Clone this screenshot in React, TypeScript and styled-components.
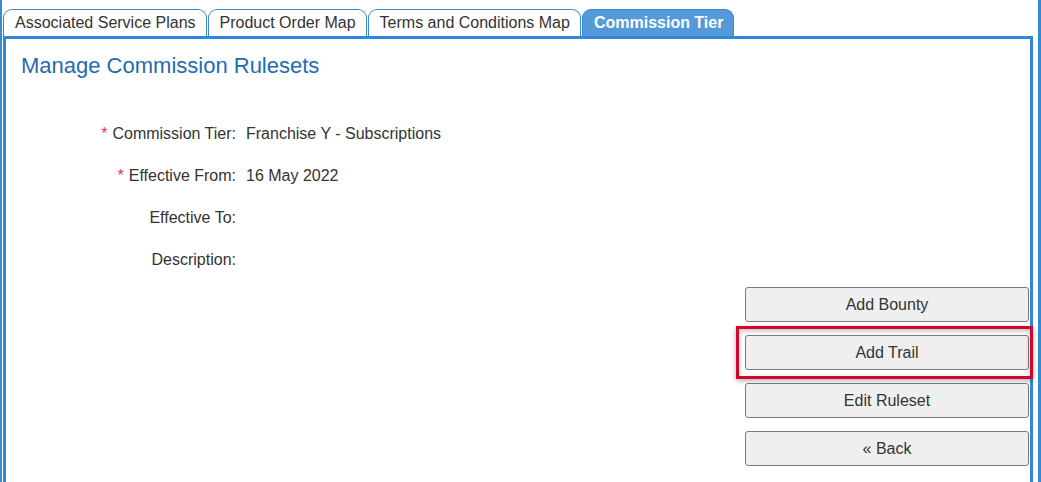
import styled, { createGlobalStyle } from "styled-components";

const GlobalStyle = createGlobalStyle`
  body {
    margin: 0;
    background: #fff;
    font-family: "Liberation Sans", Arial, sans-serif;
  }
`;

const Frame = styled.div`
  width: 1033px;
  min-height: 482px;
  border-left: 2px solid #3a8ad8;
  border-right: 3px solid #3388d8;
  padding-left: 1px;
  padding-right: 2px;
  box-sizing: content-box;
  margin-right: 3px;
  overflow: hidden;
`;

const TabBar = styled.div`
  display: flex;
  gap: 1px;
  padding-top: 9px;
  height: 27px;
`;

const Tab = styled.div<{ $active?: boolean }>`
  display: flex;
  align-items: center;
  height: 27px;
  box-sizing: border-box;
  padding: 0 10px 0 11px;
  border: 1px solid #3b88d0;
  border-bottom: none;
  border-radius: 9px 9px 0 0;
  font-size: 16px;
  color: ${(p) => (p.$active ? "#fff" : "#333")};
  font-weight: ${(p) => (p.$active ? "bold" : "normal")};
  background: ${(p) => (p.$active ? "#5499da" : "#fff")};
  white-space: nowrap;
`;

const Panel = styled.div`
  width: 1030px;
  box-sizing: border-box;
  min-height: 460px;
  border: 3px solid #3088d8;
  padding: 14px 0 20px 15px;
`;

const Title = styled.h1`
  margin: 0;
  font-size: 22px;
  font-weight: normal;
  color: #1f6cb2;
  line-height: 26px;
`;

const Form = styled.div`
  display: grid;
  grid-template-columns: 215px 1fr;
  column-gap: 10px;
  margin-top: 34px;
  font-size: 16px;
  color: #333;
`;

const Label = styled.div`
  height: 42px;
  display: flex;
  align-items: center;
  justify-content: flex-end;
  white-space: nowrap;
`;

const Required = styled.span`
  color: #e8393f;
  margin-right: 5px;
`;

const Value = styled.div`
  height: 42px;
  display: flex;
  align-items: center;
`;

const Actions = styled.div`
  display: flex;
  flex-direction: column;
  align-items: flex-end;
  gap: 13px;
  margin-top: 6px;
  padding-right: 1px;
`;

const ButtonSlot = styled.div`
  position: relative;
`;

const Button = styled.button`
  width: 284px;
  height: 35px;
  background: #efefef;
  border: 1px solid #7a7a7a;
  border-radius: 3px;
  font-family: "Liberation Sans", Arial, sans-serif;
  font-size: 16px;
  color: #333;
  cursor: pointer;
`;

const Highlight = styled.div`
  position: absolute;
  top: -9px;
  left: -9px;
  right: -4px;
  bottom: -9px;
  border: 3px solid #d3062a;
  box-shadow: 0 2px 5px rgba(0, 0, 0, 0.3), inset 0 2px 5px rgba(0, 0, 0, 0.25);
  pointer-events: none;
`;

const tabs = [
  "Associated Service Plans",
  "Product Order Map",
  "Terms and Conditions Map",
  "Commission Tier",
];

const fields = [
  { label: "Commission Tier:", value: "Franchise Y - Subscriptions", required: true },
  { label: "Effective From:", value: "16 May 2022", required: true },
  { label: "Effective To:", value: "", required: false },
  { label: "Description:", value: "", required: false },
];

const buttons = [
  { text: "Add Bounty" },
  { text: "Add Trail", highlighted: true },
  { text: "Edit Ruleset" },
  { text: "« Back" },
];

export default function App() {
  return (
    <>
      <GlobalStyle />
      <Frame>
        <TabBar>
          {tabs.map((t, i) => (
            <Tab key={t} $active={i === tabs.length - 1}>
              {t}
            </Tab>
          ))}
        </TabBar>
        <Panel>
          <Title>Manage Commission Rulesets</Title>
          <Form>
            {fields.map((f) => [
              <Label key={f.label + "l"}>
                {f.required && <Required>*</Required>}
                {f.label}
              </Label>,
              <Value key={f.label + "v"}>{f.value}</Value>,
            ])}
          </Form>
          <Actions>
            {buttons.map((b) => (
              <ButtonSlot key={b.text}>
                <Button>{b.text}</Button>
                {b.highlighted && <Highlight />}
              </ButtonSlot>
            ))}
          </Actions>
        </Panel>
      </Frame>
    </>
  );
}
